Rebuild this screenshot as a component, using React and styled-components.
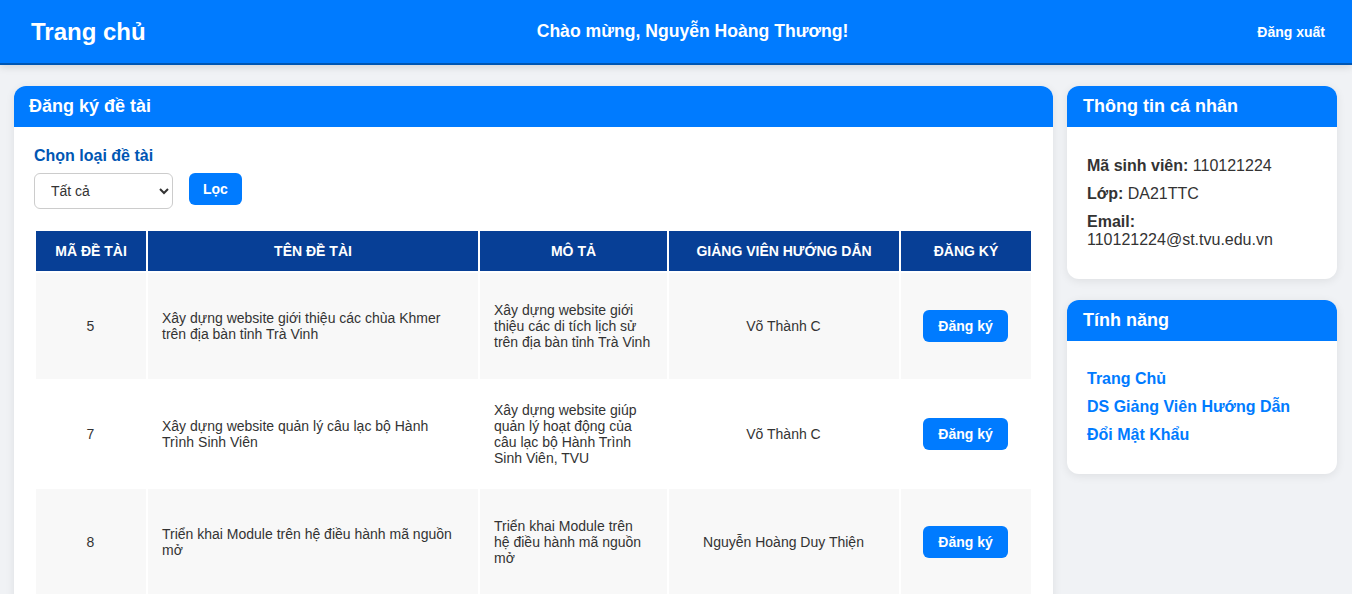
import React from 'react';
import styled, { createGlobalStyle } from 'styled-components';

const GlobalStyle = createGlobalStyle`
    body {
        margin: 0;
        background-color: #f0f2f5;
        font-family: "Liberation Sans", Arial, sans-serif;
        color: #333;
    }
`

const Header = styled.header`
    display: flex;
    align-items: center;
    justify-content: space-between;
    height: 63px;
    padding: 0 9px 0 31px;
    background-color: #007bff;
    border-bottom: 2px solid #0056b3;
    box-shadow: 0 2px 8px rgba(0,0,0,.12);
    color: white;
`
const Brand = styled.h1`
    margin: 0;
    font-size: 24px;
    font-weight: bold;
`
const Welcome = styled.div`
    font-size: 17.6px;
    font-weight: bold;
`
const LogoutButton = styled.button`
    background: transparent;
    border: 0;
    color: white;
    font-family: inherit;
    font-size: 14px;
    font-weight: bold;
    padding: 8px 18px;
    cursor: pointer;
`

const Page = styled.main`
    display: flex;
    align-items: flex-start;
    gap: 14px;
    padding: 21px 15px 0 14px;
`
const MainColumn = styled.div`
    flex: 1;
    min-width: 0;
`
const SideColumn = styled.aside`
    width: 270px;
    flex-shrink: 0;
    display: flex;
    flex-direction: column;
    gap: 21px;
`

const Card = styled.section`
    background-color: white;
    border-radius: 12px;
    box-shadow: 0 2px 10px rgba(0,0,0,.08);
    overflow: hidden;
`
const CardTitle = styled.h2`
    margin: 0;
    background-color: #007bff;
    color: white;
    font-size: 18px;
    font-weight: bold;
    line-height: 21px;
    padding: 10px ${props => props.pad || 15}px;
`
const CardBody = styled.div`
    padding: ${props => props.pad || '20px'};
`

const FilterLabel = styled.div`
    color: #0056b3;
    font-size: 16px;
    font-weight: bold;
    margin-bottom: 8px;
`
const FilterRow = styled.div`
    display: flex;
    align-items: flex-start;
    gap: 16px;
    margin-bottom: 20px;
`
const Select = styled.select`
    width: 139px;
    height: 36px;
    padding: 0 8px 0 12px;
    border: 1px solid #ccc;
    border-radius: 6px;
    background: white;
    color: #333;
    font-family: inherit;
    font-size: 14px;
`
const BlueButton = styled.button`
    background-color: #007bff;
    color: white;
    border: 0;
    border-radius: 6px;
    height: 32px;
    padding: 0 ${props => props.wide ? 15 : 14}px;
    font-family: inherit;
    font-size: 14px;
    font-weight: bold;
    cursor: pointer;
`

const Table = styled.table`
    width: 100%;
    table-layout: fixed;
    border-collapse: separate;
    border-spacing: 2px;
    font-size: 14px;
`
const Th = styled.th`
    box-sizing: border-box;
    background-color: #073f96;
    color: white;
    font-size: 14px;
    font-weight: bold;
    text-transform: uppercase;
    height: 40px;
    padding: 0 10px;
    width: ${props => props.w}px;
`
const Row = styled.tr`
    height: 106px;
    background-color: ${props => props.striped ? '#f8f8f8' : 'white'};
`
const Td = styled.td`
    padding: 15px 15px 15px 14px;
    color: #333;
    line-height: 16px;
    text-align: ${props => props.align || 'left'};
`

const InfoLine = styled.p`
    margin: 10px 0;
    font-size: 16px;
    line-height: 18px;
    color: #333;
    &:first-child { margin-top: 0; }
    &:last-child { margin-bottom: 0; }
`
const NavList = styled.ul`
    list-style: none;
    margin: 0;
    padding: 0;
`
const NavItem = styled.li`
    margin: 10px 0;
    line-height: 18px;
    &:first-child { margin-top: 0; }
    &:last-child { margin-bottom: 0; }
`
const NavLink = styled.a`
    color: #007bff;
    font-size: 16px;
    font-weight: bold;
    text-decoration: none;
`

const topics = [
    { id: 5, name: 'Xây dựng website giới thiệu các chùa Khmer trên địa bàn tỉnh Trà Vinh', desc: 'Xây dựng website giới thiệu các di tích lịch sử trên địa bàn tỉnh Trà Vinh', lecturer: 'Võ Thành C' },
    { id: 7, name: 'Xây dựng website quản lý câu lạc bộ Hành Trình Sinh Viên', desc: 'Xây dựng website giúp quản lý hoạt động của câu lạc bộ Hành Trình Sinh Viên, TVU', lecturer: 'Võ Thành C' },
    { id: 8, name: 'Triển khai Module trên hệ điều hành mã nguồn mở', desc: 'Triển khai Module trên hệ điều hành mã nguồn mở', lecturer: 'Nguyễn Hoàng Duy Thiện' },
];

const App = () => (
    <>
        <GlobalStyle />
        <Header>
            <Brand>Trang chủ</Brand>
            <Welcome>Chào mừng, Nguyễn Hoàng Thương!</Welcome>
            <LogoutButton>Đăng xuất</LogoutButton>
        </Header>
        <Page>
            <MainColumn>
                <Card>
                    <CardTitle>Đăng ký đề tài</CardTitle>
                    <CardBody>
                        <FilterLabel>Chọn loại đề tài</FilterLabel>
                        <FilterRow>
                            <Select defaultValue="all">
                                <option value="all">Tất cả</option>
                            </Select>
                            <BlueButton>Lọc</BlueButton>
                        </FilterRow>
                        <Table>
                            <thead>
                                <tr>
                                    <Th w={110}>Mã đề tài</Th>
                                    <Th w={330}>Tên đề tài</Th>
                                    <Th w={187}>Mô tả</Th>
                                    <Th w={230}>Giảng viên hướng dẫn</Th>
                                    <Th w={130}>Đăng ký</Th>
                                </tr>
                            </thead>
                            <tbody>
                                {topics.map((t, i) => (
                                    <Row key={t.id} striped={i % 2 === 0}>
                                        <Td align="center">{t.id}</Td>
                                        <Td>{t.name}</Td>
                                        <Td>{t.desc}</Td>
                                        <Td align="center">{t.lecturer}</Td>
                                        <Td align="center"><BlueButton wide>Đăng ký</BlueButton></Td>
                                    </Row>
                                ))}
                            </tbody>
                        </Table>
                    </CardBody>
                </Card>
            </MainColumn>
            <SideColumn>
                <Card>
                    <CardTitle pad={16}>Thông tin cá nhân</CardTitle>
                    <CardBody pad="30px 20px">
                        <InfoLine><b>Mã sinh viên:</b> 110121224</InfoLine>
                        <InfoLine><b>Lớp:</b> DA21TTC</InfoLine>
                        <InfoLine><b>Email:</b> 110121224@st.tvu.edu.vn</InfoLine>
                    </CardBody>
                </Card>
                <Card>
                    <CardTitle pad={16}>Tính năng</CardTitle>
                    <CardBody pad="29px 20px 30px">
                        <NavList>
                            <NavItem><NavLink href="#">Trang Chủ</NavLink></NavItem>
                            <NavItem><NavLink href="#">DS Giảng Viên Hướng Dẫn</NavLink></NavItem>
                            <NavItem><NavLink href="#">Đổi Mật Khẩu</NavLink></NavItem>
                        </NavList>
                    </CardBody>
                </Card>
            </SideColumn>
        </Page>
    </>
);

export default App;
